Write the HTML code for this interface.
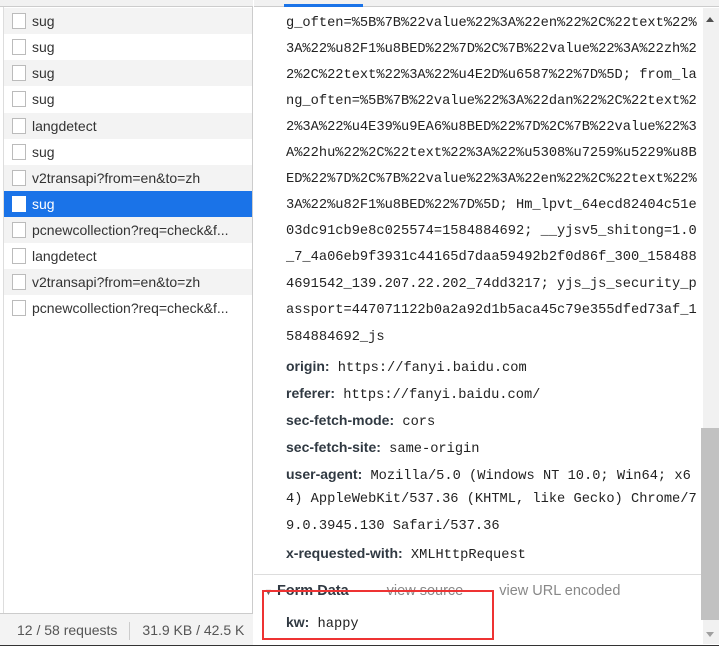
<!DOCTYPE html>
<html><head><meta charset="utf-8"><style>
*{margin:0;padding:0;box-sizing:border-box}
body{width:719px;height:646px;overflow:hidden;background:#fff;font-family:"Liberation Sans",sans-serif;font-size:13px;color:#222;position:relative}
.l{position:absolute;left:0;top:0;width:253px;height:646px;border-right:1px solid #ccc}
.row{position:absolute;left:4px;width:248px;height:26px;line-height:26px;padding-left:28px;color:#333;white-space:nowrap;font-size:14px}
.row .cb{position:absolute;left:8px;top:5px;width:14px;height:16px;border:1px solid #bbb;background:#fff}
.g{background:#f3f3f3}
.sel{background:#1a73e8;color:#fff}
.m{position:absolute;left:286px;font-family:"Liberation Mono",monospace;font-size:13.7px;line-height:20px;white-space:pre;color:#222}
.k{font-family:"Liberation Sans",sans-serif;font-weight:bold;color:#303942;font-size:14px}
</style></head><body>
<div class="l">
<div style="position:absolute;left:0;top:0;width:253px;height:7px;background:#f1f1f1;border-bottom:1px solid #ccc"></div>
<div style="position:absolute;left:3px;top:7px;width:1px;height:606px;background:#ddd"></div>
<div class="row g" style="top:8px"><span class="cb"></span>sug</div>
<div class="row" style="top:34px"><span class="cb"></span>sug</div>
<div class="row g" style="top:60px"><span class="cb"></span>sug</div>
<div class="row" style="top:86px"><span class="cb"></span>sug</div>
<div class="row g" style="top:113px"><span class="cb"></span>langdetect</div>
<div class="row" style="top:139px"><span class="cb"></span>sug</div>
<div class="row g" style="top:165px"><span class="cb"></span>v2transapi?from=en&amp;to=zh</div>
<div class="row sel" style="top:191px"><span class="cb" style="border-color:#fff"></span>sug</div>
<div class="row g" style="top:217px"><span class="cb"></span>pcnewcollection?req=check&amp;f...</div>
<div class="row" style="top:243px"><span class="cb"></span>langdetect</div>
<div class="row g" style="top:269px"><span class="cb"></span>v2transapi?from=en&amp;to=zh</div>
<div class="row" style="top:295px"><span class="cb"></span>pcnewcollection?req=check&amp;f...</div>
<div style="position:absolute;left:0;top:613px;width:253px;height:33px;background:#f3f3f3;border-top:1px solid #ccc;color:#555;font-size:14px;line-height:32px;padding-left:17px;white-space:nowrap">12 / 58 requests<span style="display:inline-block;width:1px;height:18px;background:#ccc;margin:0 12px;vertical-align:middle"></span>31.9 KB / 42.5 K</div>
</div>
<div style="position:absolute;left:254px;top:0;width:465px;height:7px;background:#f1f1f1;border-bottom:1px solid #ccc"></div>
<div style="position:absolute;left:284px;top:4px;width:79px;height:3px;background:#1a73e8"></div>
<div style="position:absolute;left:703px;top:8px;width:16px;height:636px;background:#f1f1f1"></div>
<div style="position:absolute;left:701px;top:428px;width:18px;height:192px;background:#c1c1c1"></div>
<div style="position:absolute;left:706px;top:17px;width:0;height:0;border-left:4px solid transparent;border-right:4px solid transparent;border-bottom:5px solid #505050"></div>
<div style="position:absolute;left:706px;top:632px;width:0;height:0;border-left:4px solid transparent;border-right:4px solid transparent;border-top:5px solid #a0a0a0"></div>
<div class="m" style="top:14px">g_often=%5B%7B%22value%22%3A%22en%22%2C%22text%22%</div>
<div class="m" style="top:40px">3A%22%u82F1%u8BED%22%7D%2C%7B%22value%22%3A%22zh%2</div>
<div class="m" style="top:66px">2%2C%22text%22%3A%22%u4E2D%u6587%22%7D%5D; from_la</div>
<div class="m" style="top:92px">ng_often=%5B%7B%22value%22%3A%22dan%22%2C%22text%2</div>
<div class="m" style="top:118px">2%3A%22%u4E39%u9EA6%u8BED%22%7D%2C%7B%22value%22%3</div>
<div class="m" style="top:144px">A%22hu%22%2C%22text%22%3A%22%u5308%u7259%u5229%u8B</div>
<div class="m" style="top:170px">ED%22%7D%2C%7B%22value%22%3A%22en%22%2C%22text%22%</div>
<div class="m" style="top:196px">3A%22%u82F1%u8BED%22%7D%5D; Hm_lpvt_64ecd82404c51e</div>
<div class="m" style="top:222px">03dc91cb9e8c025574=1584884692; __yjsv5_shitong=1.0</div>
<div class="m" style="top:248px">_7_4a06eb9f3931c44165d7daa59492b2f0d86f_300_158488</div>
<div class="m" style="top:275px">4691542_139.207.22.202_74dd3217; yjs_js_security_p</div>
<div class="m" style="top:301px">assport=447071122b0a2a92d1b5aca45c79e355dfed73af_1</div>
<div class="m" style="top:328px">584884692_js</div>
<div class="m" style="top:356px"><span class="k">origin:</span> https://fanyi.baidu.com</div>
<div class="m" style="top:383px"><span class="k">referer:</span> https://fanyi.baidu.com/</div>
<div class="m" style="top:410px"><span class="k">sec-fetch-mode:</span> cors</div>
<div class="m" style="top:437px"><span class="k">sec-fetch-site:</span> same-origin</div>
<div class="m" style="top:464px"><span class="k">user-agent:</span> Mozilla/5.0 (Windows NT 10.0; Win64; x6</div>
<div class="m" style="top:490px">4) AppleWebKit/537.36 (KHTML, like Gecko) Chrome/7</div>
<div class="m" style="top:517px">9.0.3945.130 Safari/537.36</div>
<div class="m" style="top:543px"><span class="k">x-requested-with:</span> XMLHttpRequest</div>
<div style="position:absolute;left:254px;top:574px;width:447px;height:1px;background:#ddd"></div>
<div style="position:absolute;left:264px;top:581px;line-height:20px;font-size:14.5px;white-space:nowrap"><span style="font-size:9px;color:#666">▼</span> <b style="color:#303942">Form Data</b><span style="color:#888;margin-left:38px">view source</span><span style="color:#888;margin-left:36px">view URL encoded</span></div>
<div class="m" style="top:612px;left:286px"><span class="k">kw:</span> happy</div>
<div style="position:absolute;left:262px;top:590px;width:232px;height:50px;border:2px solid #ee3333"></div>
<div style="position:absolute;left:0;top:645px;width:719px;height:1px;background:#333"></div>
</body></html>
